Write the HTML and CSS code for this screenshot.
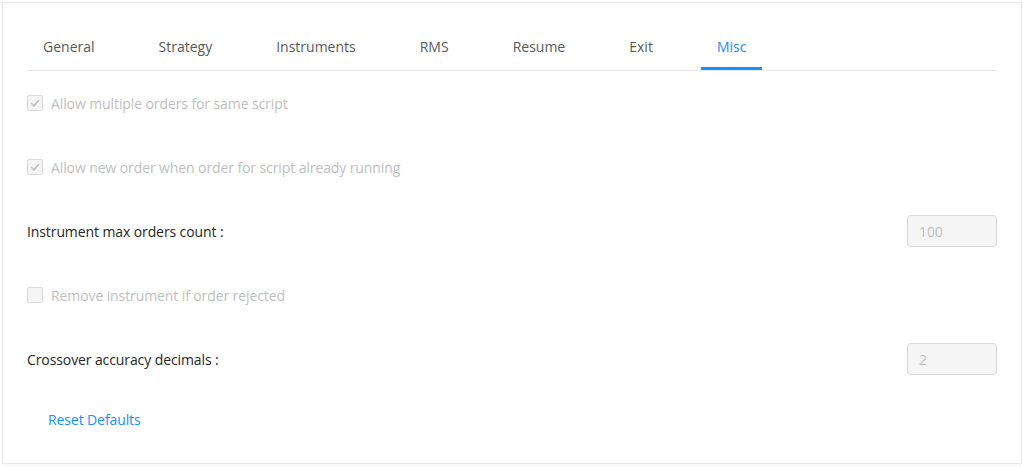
FILE: index.html
```html
<!DOCTYPE html>
<html>
<head>
<meta charset="utf-8">
<link rel="stylesheet" href="styles.css">
</head>
<body>
<div class="page">
  <div class="card">
    <div class="tabs">
      <div class="tab">General</div>
      <div class="tab">Strategy</div>
      <div class="tab">Instruments</div>
      <div class="tab">RMS</div>
      <div class="tab">Resume</div>
      <div class="tab">Exit</div>
      <div class="tab active">Misc</div>
    </div>
    <div class="rows">
      <label class="row check disabled">
        <span class="box checked"><svg viewBox="0 0 16 16" width="16" height="16"><path d="M4.2 8.2 L7 10.8 L11.8 5.4" fill="none" stroke="#bfbfbf" stroke-width="1.6"/></svg></span>
        <span class="ctext">Allow multiple orders for same script</span>
      </label>
      <label class="row check disabled">
        <span class="box checked"><svg viewBox="0 0 16 16" width="16" height="16"><path d="M4.2 8.2 L7 10.8 L11.8 5.4" fill="none" stroke="#bfbfbf" stroke-width="1.6"/></svg></span>
        <span class="ctext">Allow new order when order for script already running</span>
      </label>
      <div class="row field">
        <span class="flabel">Instrument max orders count :</span>
        <div class="input">100</div>
      </div>
      <label class="row check disabled">
        <span class="box"></span>
        <span class="ctext">Remove instrument if order rejected</span>
      </label>
      <div class="row field">
        <span class="flabel">Crossover accuracy decimals :</span>
        <div class="input">2</div>
      </div>
      <div class="row reset">
        <span class="link">Reset Defaults</span>
      </div>
    </div>
  </div>
  <div class="footer"></div>
</div>
</body>
</html>
```
FILE: styles.css
```css
* { box-sizing: border-box; }
html, body { margin: 0; padding: 0; background: #fff; }
body {
  font-family: "Open Sans", "Noto Sans", sans-serif;
  font-size: 14px;
  color: #333;
}
.page {
  padding: 2px 2px 0 2px;
}
.card {
  width: 1020px;
  height: 462px;
  border: 1px solid #e8e8e8;
  background: #fff;
  padding: 0 24px;
}
.tabs {
  display: flex;
  gap: 32px;
  height: 68px;
  border-bottom: 1px solid #e8e8e8;
}
.tab {
  padding: 0 16px;
  display: flex;
  align-items: center;
  padding-top: 22px;
  height: 67px;
  color: #595959;
  font-size: 14px;
  border-bottom: 3px solid transparent;
}
.tab.active {
  color: #1890ff;
  border-bottom-color: #1890ff;
}
.rows {
  display: flex;
  flex-direction: column;
}
.row {
  height: 64px;
  display: flex;
  align-items: center;
  letter-spacing: -0.1px;
}
.check { gap: 8px; }
.box {
  width: 16px;
  height: 16px;
  border: 1px solid #d9d9d9;
  border-radius: 2px;
  background: #f5f5f5;
  display: flex;
  align-items: center;
  justify-content: center;
  flex: none;
}
.box svg { display: block; margin: -1px; }
.ctext { color: #bfbfbf; }
.field { justify-content: space-between; }
.flabel { color: #262626; }
.input {
  width: 90px;
  height: 32px;
  border: 1px solid #d9d9d9;
  border-radius: 4px;
  background: #f5f5f5;
  color: #bfbfbf;
  padding: 0 11px;
  display: flex;
  align-items: center;
}
.reset { padding-left: 21px; height: 56px; }
.link { color: #1890ff; }
.footer {
  height: 4px;
  background: #fafafa;
}
```
